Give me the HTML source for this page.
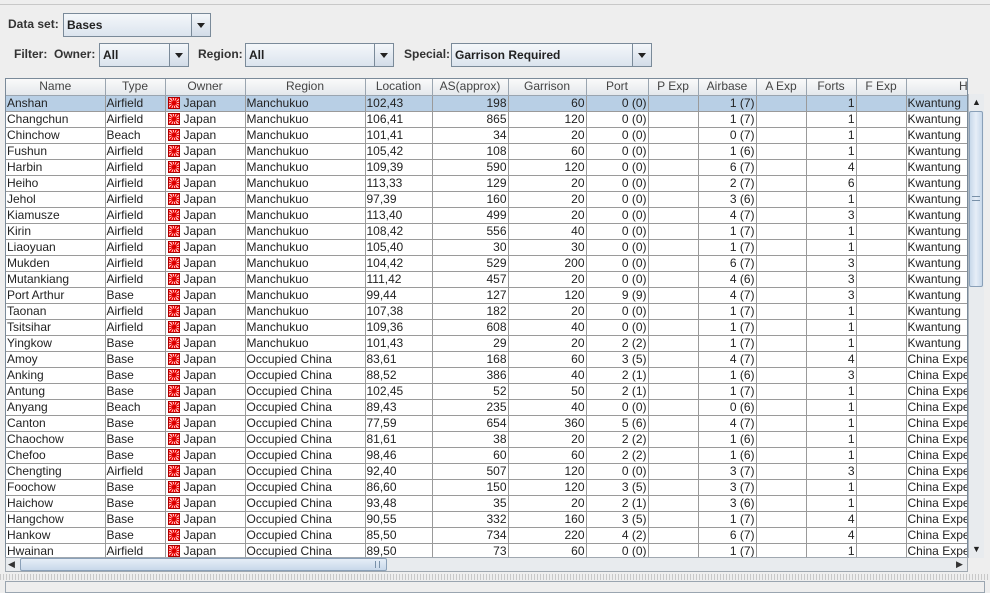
<!DOCTYPE html>
<html><head><meta charset="utf-8"><style>
*{box-sizing:border-box;margin:0;padding:0}
body{width:990px;height:591px;background:#eeeeee;font-family:"Liberation Sans",sans-serif;font-size:12px;color:#333;position:relative;overflow:hidden}
.abs{position:absolute}
.lbl{position:absolute;font-weight:bold;font-size:12px;color:#333}
.cb{position:absolute;border:1px solid #7a8a99;background:linear-gradient(#f4f7fa,#dbe4ee);font-weight:bold;padding:3px 3px;height:24px;line-height:16px;color:#222}
.cb .ar{position:absolute;right:0;top:0;width:19px;height:22px;border-left:1px solid #7a8a99;background:linear-gradient(#f4f7fa,#d2dce8)}
.cb .ar:after{content:"";position:absolute;left:5px;top:9px;border-left:4px solid transparent;border-right:4px solid transparent;border-top:5px solid #222}
#tbl{position:absolute;left:5px;top:78px;width:963px;height:480px;overflow:hidden;border:1px solid #7a8a99;background:#fff}
table{border-collapse:collapse;table-layout:fixed;width:1023px;font-size:12px}
th{height:16px;font-weight:normal;background:linear-gradient(#fafafa,#e4e8ec);border-right:1px solid #9aa5b0;border-bottom:1px solid #9aa5b0;color:#444;padding:0;line-height:15px}
td{height:16px;border-right:1px solid #9a9a9a;border-bottom:1px solid #9a9a9a;padding:0 1px;line-height:15px;white-space:nowrap;overflow:hidden;color:#222}
td.r{text-align:right}
tr.sel td{background:#b8cfe5}
.f{display:inline-block;width:12px;height:12px;vertical-align:-2px;margin:0 4px 0 1px;background:radial-gradient(circle,#d00 0 2px,transparent 3px),repeating-conic-gradient(#e00 0 15deg,#fbb 15deg 30deg);border:1px solid #a00}
</style></head><body>
<div class="abs" style="left:0;top:4px;width:990px;border-top:1px solid #c8c8c8"></div>
<div class="lbl" style="left:8px;top:17px">Data set:</div>
<div class="cb" style="left:63px;top:13px;width:148px">Bases<div class="ar"></div></div>
<div class="lbl" style="left:14px;top:47px">Filter:</div>
<div class="lbl" style="left:54px;top:47px">Owner:</div>
<div class="cb" style="left:99px;top:43px;width:90px">All<div class="ar"></div></div>
<div class="lbl" style="left:198px;top:47px">Region:</div>
<div class="cb" style="left:245px;top:43px;width:149px">All<div class="ar"></div></div>
<div class="lbl" style="left:404px;top:47px">Special:</div>
<div class="cb" style="left:451px;top:43px;width:201px">Garrison Required<div class="ar"></div></div>
<div id="tbl"><table>
<colgroup><col style="width:99px"><col style="width:60px"><col style="width:80px"><col style="width:120px"><col style="width:67px"><col style="width:76px"><col style="width:78px"><col style="width:62px"><col style="width:50px"><col style="width:58px"><col style="width:50px"><col style="width:50px"><col style="width:50px"><col style="width:124px"></colgroup>
<tr><th>Name</th><th>Type</th><th>Owner</th><th>Region</th><th>Location</th><th>AS(approx)</th><th>Garrison</th><th>Port</th><th>P Exp</th><th>Airbase</th><th>A Exp</th><th>Forts</th><th>F Exp</th><th>HQ</th></tr>
<tr class="sel"><td>Anshan</td><td>Airfield</td><td><span class="f"></span>Japan</td><td>Manchukuo</td><td>102,43</td><td class="r">198</td><td class="r">60</td><td class="r">0 (0)</td><td></td><td class="r">1 (7)</td><td></td><td class="r">1</td><td></td><td>Kwantung</td></tr>
<tr><td>Changchun</td><td>Airfield</td><td><span class="f"></span>Japan</td><td>Manchukuo</td><td>106,41</td><td class="r">865</td><td class="r">120</td><td class="r">0 (0)</td><td></td><td class="r">1 (7)</td><td></td><td class="r">1</td><td></td><td>Kwantung</td></tr>
<tr><td>Chinchow</td><td>Beach</td><td><span class="f"></span>Japan</td><td>Manchukuo</td><td>101,41</td><td class="r">34</td><td class="r">20</td><td class="r">0 (0)</td><td></td><td class="r">0 (7)</td><td></td><td class="r">1</td><td></td><td>Kwantung</td></tr>
<tr><td>Fushun</td><td>Airfield</td><td><span class="f"></span>Japan</td><td>Manchukuo</td><td>105,42</td><td class="r">108</td><td class="r">60</td><td class="r">0 (0)</td><td></td><td class="r">1 (6)</td><td></td><td class="r">1</td><td></td><td>Kwantung</td></tr>
<tr><td>Harbin</td><td>Airfield</td><td><span class="f"></span>Japan</td><td>Manchukuo</td><td>109,39</td><td class="r">590</td><td class="r">120</td><td class="r">0 (0)</td><td></td><td class="r">6 (7)</td><td></td><td class="r">4</td><td></td><td>Kwantung</td></tr>
<tr><td>Heiho</td><td>Airfield</td><td><span class="f"></span>Japan</td><td>Manchukuo</td><td>113,33</td><td class="r">129</td><td class="r">20</td><td class="r">0 (0)</td><td></td><td class="r">2 (7)</td><td></td><td class="r">6</td><td></td><td>Kwantung</td></tr>
<tr><td>Jehol</td><td>Airfield</td><td><span class="f"></span>Japan</td><td>Manchukuo</td><td>97,39</td><td class="r">160</td><td class="r">20</td><td class="r">0 (0)</td><td></td><td class="r">3 (6)</td><td></td><td class="r">1</td><td></td><td>Kwantung</td></tr>
<tr><td>Kiamusze</td><td>Airfield</td><td><span class="f"></span>Japan</td><td>Manchukuo</td><td>113,40</td><td class="r">499</td><td class="r">20</td><td class="r">0 (0)</td><td></td><td class="r">4 (7)</td><td></td><td class="r">3</td><td></td><td>Kwantung</td></tr>
<tr><td>Kirin</td><td>Airfield</td><td><span class="f"></span>Japan</td><td>Manchukuo</td><td>108,42</td><td class="r">556</td><td class="r">40</td><td class="r">0 (0)</td><td></td><td class="r">1 (7)</td><td></td><td class="r">1</td><td></td><td>Kwantung</td></tr>
<tr><td>Liaoyuan</td><td>Airfield</td><td><span class="f"></span>Japan</td><td>Manchukuo</td><td>105,40</td><td class="r">30</td><td class="r">30</td><td class="r">0 (0)</td><td></td><td class="r">1 (7)</td><td></td><td class="r">1</td><td></td><td>Kwantung</td></tr>
<tr><td>Mukden</td><td>Airfield</td><td><span class="f"></span>Japan</td><td>Manchukuo</td><td>104,42</td><td class="r">529</td><td class="r">200</td><td class="r">0 (0)</td><td></td><td class="r">6 (7)</td><td></td><td class="r">3</td><td></td><td>Kwantung</td></tr>
<tr><td>Mutankiang</td><td>Airfield</td><td><span class="f"></span>Japan</td><td>Manchukuo</td><td>111,42</td><td class="r">457</td><td class="r">20</td><td class="r">0 (0)</td><td></td><td class="r">4 (6)</td><td></td><td class="r">3</td><td></td><td>Kwantung</td></tr>
<tr><td>Port Arthur</td><td>Base</td><td><span class="f"></span>Japan</td><td>Manchukuo</td><td>99,44</td><td class="r">127</td><td class="r">120</td><td class="r">9 (9)</td><td></td><td class="r">4 (7)</td><td></td><td class="r">3</td><td></td><td>Kwantung</td></tr>
<tr><td>Taonan</td><td>Airfield</td><td><span class="f"></span>Japan</td><td>Manchukuo</td><td>107,38</td><td class="r">182</td><td class="r">20</td><td class="r">0 (0)</td><td></td><td class="r">1 (7)</td><td></td><td class="r">1</td><td></td><td>Kwantung</td></tr>
<tr><td>Tsitsihar</td><td>Airfield</td><td><span class="f"></span>Japan</td><td>Manchukuo</td><td>109,36</td><td class="r">608</td><td class="r">40</td><td class="r">0 (0)</td><td></td><td class="r">1 (7)</td><td></td><td class="r">1</td><td></td><td>Kwantung</td></tr>
<tr><td>Yingkow</td><td>Base</td><td><span class="f"></span>Japan</td><td>Manchukuo</td><td>101,43</td><td class="r">29</td><td class="r">20</td><td class="r">2 (2)</td><td></td><td class="r">1 (7)</td><td></td><td class="r">1</td><td></td><td>Kwantung</td></tr>
<tr><td>Amoy</td><td>Base</td><td><span class="f"></span>Japan</td><td>Occupied China</td><td>83,61</td><td class="r">168</td><td class="r">60</td><td class="r">3 (5)</td><td></td><td class="r">4 (7)</td><td></td><td class="r">4</td><td></td><td>China Expe</td></tr>
<tr><td>Anking</td><td>Base</td><td><span class="f"></span>Japan</td><td>Occupied China</td><td>88,52</td><td class="r">386</td><td class="r">40</td><td class="r">2 (1)</td><td></td><td class="r">1 (6)</td><td></td><td class="r">3</td><td></td><td>China Expe</td></tr>
<tr><td>Antung</td><td>Base</td><td><span class="f"></span>Japan</td><td>Occupied China</td><td>102,45</td><td class="r">52</td><td class="r">50</td><td class="r">2 (1)</td><td></td><td class="r">1 (7)</td><td></td><td class="r">1</td><td></td><td>China Expe</td></tr>
<tr><td>Anyang</td><td>Beach</td><td><span class="f"></span>Japan</td><td>Occupied China</td><td>89,43</td><td class="r">235</td><td class="r">40</td><td class="r">0 (0)</td><td></td><td class="r">0 (6)</td><td></td><td class="r">1</td><td></td><td>China Expe</td></tr>
<tr><td>Canton</td><td>Base</td><td><span class="f"></span>Japan</td><td>Occupied China</td><td>77,59</td><td class="r">654</td><td class="r">360</td><td class="r">5 (6)</td><td></td><td class="r">4 (7)</td><td></td><td class="r">1</td><td></td><td>China Expe</td></tr>
<tr><td>Chaochow</td><td>Base</td><td><span class="f"></span>Japan</td><td>Occupied China</td><td>81,61</td><td class="r">38</td><td class="r">20</td><td class="r">2 (2)</td><td></td><td class="r">1 (6)</td><td></td><td class="r">1</td><td></td><td>China Expe</td></tr>
<tr><td>Chefoo</td><td>Base</td><td><span class="f"></span>Japan</td><td>Occupied China</td><td>98,46</td><td class="r">60</td><td class="r">60</td><td class="r">2 (2)</td><td></td><td class="r">1 (6)</td><td></td><td class="r">1</td><td></td><td>China Expe</td></tr>
<tr><td>Chengting</td><td>Airfield</td><td><span class="f"></span>Japan</td><td>Occupied China</td><td>92,40</td><td class="r">507</td><td class="r">120</td><td class="r">0 (0)</td><td></td><td class="r">3 (7)</td><td></td><td class="r">3</td><td></td><td>China Expe</td></tr>
<tr><td>Foochow</td><td>Base</td><td><span class="f"></span>Japan</td><td>Occupied China</td><td>86,60</td><td class="r">150</td><td class="r">120</td><td class="r">3 (5)</td><td></td><td class="r">3 (7)</td><td></td><td class="r">1</td><td></td><td>China Expe</td></tr>
<tr><td>Haichow</td><td>Base</td><td><span class="f"></span>Japan</td><td>Occupied China</td><td>93,48</td><td class="r">35</td><td class="r">20</td><td class="r">2 (1)</td><td></td><td class="r">3 (6)</td><td></td><td class="r">1</td><td></td><td>China Expe</td></tr>
<tr><td>Hangchow</td><td>Base</td><td><span class="f"></span>Japan</td><td>Occupied China</td><td>90,55</td><td class="r">332</td><td class="r">160</td><td class="r">3 (5)</td><td></td><td class="r">1 (7)</td><td></td><td class="r">4</td><td></td><td>China Expe</td></tr>
<tr><td>Hankow</td><td>Base</td><td><span class="f"></span>Japan</td><td>Occupied China</td><td>85,50</td><td class="r">734</td><td class="r">220</td><td class="r">4 (2)</td><td></td><td class="r">6 (7)</td><td></td><td class="r">4</td><td></td><td>China Expe</td></tr>
<tr><td>Hwainan</td><td>Airfield</td><td><span class="f"></span>Japan</td><td>Occupied China</td><td>89,50</td><td class="r">73</td><td class="r">60</td><td class="r">0 (0)</td><td></td><td class="r">1 (7)</td><td></td><td class="r">1</td><td></td><td>China Expe</td></tr>
</table></div>
<!-- vertical scrollbar -->
<div class="abs" style="left:968px;top:94px;width:16px;height:464px;background:#e8ebee;border-left:1px solid #b0b8c0"></div>
<div class="abs" style="left:969px;top:95px;width:15px;height:15px;font-size:9px;text-align:center;line-height:15px;color:#222">▲</div>
<div class="abs" style="left:969px;top:111px;width:14px;height:176px;background:linear-gradient(90deg,#c8d8ea,#e6eef7,#c8d8ea);border:1px solid #8aa0b8;border-radius:2px"></div>
<div class="abs" style="left:972px;top:196px;width:8px;height:5px;border-top:1px solid #7890a8;border-bottom:1px solid #7890a8"></div>
<div class="abs" style="left:969px;top:542px;width:15px;height:15px;font-size:9px;text-align:center;line-height:15px;color:#222">▼</div>
<!-- horizontal scrollbar -->
<div class="abs" style="left:5px;top:557px;width:963px;height:15px;background:#e8ebee;border:1px solid #a0a8b0"></div>
<div class="abs" style="left:8px;top:557px;font-size:9px;line-height:15px">◀</div>
<div class="abs" style="left:20px;top:558px;width:367px;height:13px;background:linear-gradient(#e6eef7,#c8d8ea);border:1px solid #8aa0b8;border-radius:2px"></div>
<div class="abs" style="left:375px;top:561px;width:5px;height:7px;border-left:1px solid #7890a8;border-right:1px solid #7890a8"></div>
<div class="abs" style="left:956px;top:557px;font-size:9px;line-height:15px">▶</div>
<!-- divider -->
<div class="abs" style="left:0;top:574px;width:990px;height:6px;background:repeating-linear-gradient(90deg,#c8c8c8 0 1px,#eee 1px 3px)"></div>
<div class="abs" style="left:5px;top:581px;width:980px;height:12px;background:#eeeeee;border:1px solid #9aa5b0"></div>
</body></html>
